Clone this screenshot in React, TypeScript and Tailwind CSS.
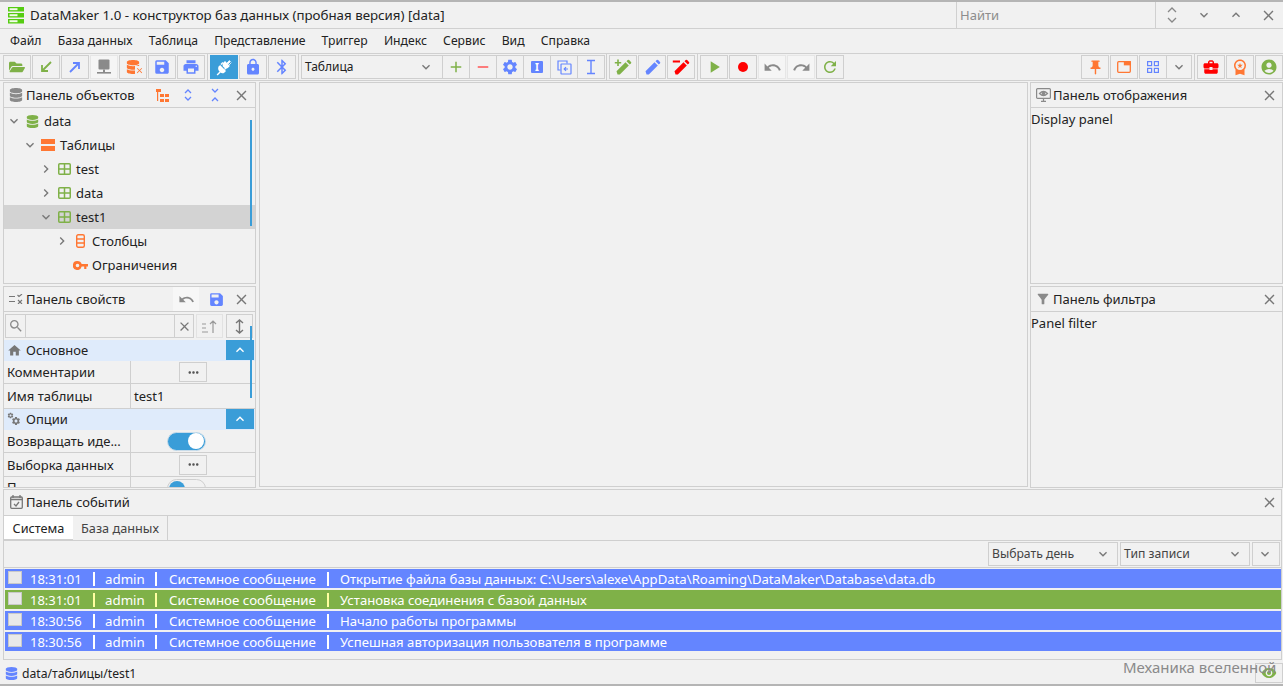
import React from "react";
import {
  MdUndo, MdRedo, MdRefresh, MdSave, MdPrint, MdLock, MdBluetooth, MdSettings, MdHome, MdSearch, MdClose,
  MdExpandMore, MdExpandLess, MdChevronRight, MdAdd, MdRemove, MdPlayArrow, MdPushPin, MdAccountCircle, MdFilterAlt, MdVisibility, MdMoreHoriz, MdBusinessCenter, MdWorkspacePremium,
} from "react-icons/md";
import { FaDatabase, FaFolderOpen } from "react-icons/fa";

const B = "#6485ff", G = "#7fb148", O = "#ff7733", R = "#ff0000", K = "#8a8a8a";

function Close() {
  return <MdClose size={17} color="#777" />;
}

function Tool({ w = "w-[28px]", on, light, children }: { w?: string; on?: boolean; light?: boolean; children: React.ReactNode }) {
  return (
    <div className={`${w} h-[24px] shrink-0 flex items-center justify-center border ${on ? "bg-[#3a9dd8] border-[#3a9dd8]" : light ? "border-[#e6e6e6] bg-[#f5f5f5]" : "border-[#cfcfcf]"}`}>
      {children}
    </div>
  );
}

function Sep() {
  return <div className="w-px h-[27px] bg-[#cfcfcf] mx-[1px] shrink-0" />;
}

function PanelHead({ icon, title, cls = "h-[24px] pr-[5px]", children }: { icon: React.ReactNode; title: string; cls?: string; children?: React.ReactNode }) {
  return (
    <div className={`${cls} shrink-0 flex items-center border-b border-[#cfcfcf] pl-[3px] box-content`}>
      <div className="w-[18px] flex justify-center shrink-0">{icon}</div>
      <span className="ml-[1px] flex-1 whitespace-nowrap">{title}</span>
      {children}
      <div className="ml-[8px]"><Close /></div>
    </div>
  );
}

function TreeRow({ pad, chev, icon, label, sel }: { pad: number; chev?: "down" | "right"; icon: React.ReactNode; label: string; sel?: boolean }) {
  return (
    <div className={`h-[24px] flex items-center ${sel ? "bg-[#d3d3d3]" : ""}`} style={{ paddingLeft: pad }}>
      <div className="w-[16px] flex justify-center shrink-0">
        {chev === "down" && <MdExpandMore size={16} color="#777" />}
        {chev === "right" && <MdChevronRight size={16} color="#777" />}
      </div>
      <div className="w-[16px] ml-[2px] flex justify-center shrink-0">{icon}</div>
      <span className="ml-[4px]">{label}</span>
    </div>
  );
}

function GridIcon() {
  return (
    <svg width="13" height="12" viewBox="0 0 13 12" fill="none" stroke={G} strokeWidth="1.5">
      <rect x="0.75" y="0.75" width="11.5" height="10.5" rx="1" />
      <path d="M0.75 6H12.25M6.5 0.75V11.25" />
    </svg>
  );
}

function Section({ icon, label }: { icon: React.ReactNode; label: string }) {
  return (
    <div className="h-[20px] flex items-center bg-[#dfebfb] border-b border-[#dfebfb] box-content">
      <div className="w-[16px] ml-[2px] flex justify-center shrink-0">{icon}</div>
      <span className="ml-[4px] flex-1">{label}</span>
      <div className="w-[28px] h-[20px] bg-[#3a9dd8] flex items-center justify-center mr-[1px]">
        <MdExpandLess size={16} color="#fff" />
      </div>
    </div>
  );
}

function PropRow({ label, h, children }: { label: string; h: string; children?: React.ReactNode }) {
  return (
    <div className={`${h} shrink-0 flex border-b border-[#cfcfcf]`}>
      <div className="w-[127px] pl-[3px] flex items-center border-r border-[#cfcfcf] whitespace-nowrap overflow-hidden">{label}</div>
      <div className="flex-1 flex items-center">{children}</div>
    </div>
  );
}

function Dots() {
  return (
    <div className="ml-[48px] w-[28px] h-[20px] border border-[#cfcfcf] flex items-center justify-center">
      <MdMoreHoriz size={15} color="#555" />
    </div>
  );
}

function Toggle({ off }: { off?: boolean }) {
  return (
    <div className={`ml-[36px] w-[39px] h-[19px] rounded-full border flex items-center ${off ? "bg-[#f1f1f1] border-[#cfcfcf] justify-start pl-[1px]" : "bg-[#3a9dd8] border-[#c8dcea] justify-end pr-[1px]"}`}>
      <div className={`w-[16px] h-[16px] rounded-full ${off ? "bg-[#3a9dd8]" : "bg-white"}`} />
    </div>
  );
}

function Bar({ color }: { color: string }) {
  return <span className="w-[2px] h-[14px] shrink-0" style={{ background: color }} />;
}

function LogRow({ color, time, text, bar }: { color: string; time: string; text: string; bar: string }) {
  return (
    <div className="h-[19px] flex items-center text-white whitespace-nowrap text-[13.3px]" style={{ background: color }}>
      <div className="w-[14px] h-[13px] ml-[3px] mr-[8px] bg-[#e9e9e9] border border-[#c9c9c9] shrink-0 self-start mt-[2px]" />
      <span className="w-[52px] mr-[11px] text-[13px]">{time}</span>
      <Bar color={bar} />
      <span className="w-[39px] ml-[10px] mr-[11px]">admin</span>
      <Bar color={bar} />
      <span className="w-[148px] ml-[12px] mr-[10px]">Системное сообщение</span>
      <Bar color={bar} />
      <span className="ml-[11px] text-[13.15px]">{text}</span>
    </div>
  );
}

function Combo({ w, label }: { w: string; label?: string }) {
  return (
    <div className={`${w} h-[24px] border border-[#cfcfcf] flex items-center pl-[3px] pr-[6px] text-[12.2px]`}>
      <span className="flex-1 text-[#444] whitespace-nowrap">{label}</span>
      <MdExpandMore size={16} color="#777" />
    </div>
  );
}

function PenIcon({ color, kind }: { color: string; kind?: "wand" | "dash" }) {
  return (
    <svg width="18" height="16" viewBox="0 0 18 16" fill={color}>
      <path d="M3.5 15.5L2.5 12.2 11.5 3.2 14.8 6.5 5.8 15.5z" />
      <path d="M12.5 2.2L13.7 1a1 1 0 0 1 1.4 0l1.9 1.9a1 1 0 0 1 0 1.4L15.8 5.5z" />
      {kind === "wand" && <path d="M3.2 0.5h1.6v2.4h2.4v1.6H4.8v2.4H3.2V4.5H0.8V2.9h2.4z" />}
      {kind === "dash" && <rect x="0.8" y="1.5" width="7.2" height="2" />}
    </svg>
  );
}

export default function App() {
  return (
    <div className="relative w-[1283px] h-[686px] overflow-hidden bg-[#f1f1f1] text-[13px] leading-[18px] text-[#222] font-['Noto_Sans',sans-serif] flex flex-col">
      <div className="h-[2px] bg-[#b5b5b5] shrink-0" />
      {/* title */}
      <div className="h-[27px] shrink-0 flex items-center border-b border-[#d0d0d0]">
        <svg className="ml-[8px]" width="17" height="17" viewBox="0 0 17 17">
          <rect y="0" width="16" height="4.5" fill="#55cc11" />
          <rect x="1.5" y="1.2" width="8" height="2" fill="#f2fbe8" />
          <rect y="6" width="16" height="4.5" fill="#55cc11" />
          <rect x="1.5" y="7.2" width="8" height="2" fill="#f2fbe8" />
          <rect y="12" width="16" height="4.5" fill="#55cc11" />
          <rect x="1.5" y="13.2" width="8" height="2" fill="#f2fbe8" />
        </svg>
        <span className="ml-[5px] flex-1 whitespace-nowrap text-[13.3px]">DataMaker 1.0 - конструктор баз данных (пробная версия) [data]</span>
        <div className="w-[200px] h-full border-l border-r border-[#d0d0d0] pl-[3px] flex items-center text-[#8d8d8d]">Найти</div>
        <div className="w-[127px] flex items-center justify-between pl-[8px] pr-[6px]">
          <svg width="16" height="20" viewBox="0 0 16 20" fill="none" stroke="#888" strokeWidth="1.3"><path d="M4 7l4-4 4 4M4 13l4 4 4-4" /></svg>
          <MdExpandMore size={16} color="#777" />
          <MdExpandLess size={16} color="#777" />
          <Close />
        </div>
      </div>
      {/* menu */}
      <div className="h-[25px] shrink-0 flex items-center gap-[16.2px] pl-[10px] border-b border-[#d0d0d0] text-[12.2px] whitespace-nowrap">
        {["Файл", "База данных", "Таблица", "Представление", "Триггер", "Индекс", "Сервис", "Вид", "Справка"].map((m) => (
          <span key={m}>{m}</span>
        ))}
      </div>
      {/* toolbar */}
      <div className="h-[27px] shrink-0 flex items-center pl-[3px] gap-px border-b border-[#d0d0d0]">
        <Tool><FaFolderOpen size={16} color={G} /></Tool>
        <Tool>
          <svg width="14" height="14" viewBox="0 0 14 14" fill="none" stroke={G} strokeWidth="1.8"><path d="M12 2L3 11M3 5v6h6" /></svg>
        </Tool>
        <Tool>
          <svg width="14" height="14" viewBox="0 0 14 14" fill="none" stroke={B} strokeWidth="1.8"><path d="M2 12L11 3M5 3h6v6" /></svg>
        </Tool>
        <Tool light>
          <svg width="16" height="16" viewBox="0 0 16 16" fill={K}><rect x="2.5" y="0.5" width="11" height="10" rx="1" /><rect x="7" y="10.5" width="2" height="2.5" /><rect x="1" y="13" width="14" height="1.6" /></svg>
        </Tool>
        <Tool>
          <span className="relative flex"><FaDatabase size={14} color={O} /><MdClose size={9} color={O} className="absolute -right-[4px] -bottom-[1px] bg-[#f1f1f1]" /></span>
        </Tool>
        <Tool><MdSave size={18} color={B} /></Tool>
        <Tool><MdPrint size={18} color={B} /></Tool>
        <Sep />
        <Tool on>
          <svg width="18" height="18" viewBox="0 0 18 18" fill="#fff">
            <path d="M8.5 4.6L10 3.1l4.9 4.9-1.5 1.5c-1 1-2.6 1.2-3.8.4L7.9 8.4C7.2 7.2 7.5 5.6 8.5 4.6z" />
            <path d="M12 5l2.4-2.4 1 1L13 6zM14 7l2.4-2.4" stroke="#fff" strokeWidth="0.8" />
            <path d="M3.6 8.5L5.1 7l5.9 5.9-1.5 1.5c-1 1-2.6 1.2-3.8.4L4 13.1c-1-1.2-1.1-3.4-.4-4.6z" />
            <path d="M4.6 13.4l-3 3 1 1 3-3z" />
            <path d="M5.5 6l2-2 .9.9-2 2zM9 11l2-2 .9.9-2 2z" />
          </svg>
        </Tool>
        <Tool><MdLock size={18} color={B} /></Tool>
        <Tool><MdBluetooth size={18} color={B} /></Tool>
        <Sep />
        <div className="w-[142px] h-[24px] border border-[#cfcfcf] flex items-center pl-[3px] pr-[8px] shrink-0 text-[12px]">
          <span className="flex-1">Таблица</span>
          <MdExpandMore size={16} color="#777" />
        </div>
        <div className="flex -ml-px -mr-px">
          {[
            <MdAdd key="a" size={18} color={G} />,
            <MdRemove key="b" size={18} color="#ff5555" />,
            <MdSettings key="c" size={18} color={B} />,
            <span key="d" className="w-[12px] h-[12px] rounded-[1px] flex items-center justify-center text-white text-[10px] font-bold bg-[#6485ff]">I</span>,
            <svg key="e" width="15" height="15" viewBox="0 0 15 15" fill="none" stroke={B} strokeWidth="1.2"><path d="M10 3.5V1H1v9h2.5" /><rect x="4" y="4" width="10" height="10" rx="0.5" /><path d="M11 9H7.5M9 7.2L7.2 9 9 10.8" /></svg>,
            <svg key="f" width="10" height="16" viewBox="0 0 10 16" fill="none" stroke={B} strokeWidth="1.4"><path d="M1 1.5h8M1 14.5h8M5 1.5v13" /></svg>,
          ].map((ic, i) => (
            <div key={i} className="-ml-px"><Tool w="w-[28px]">{ic}</Tool></div>
          ))}
        </div>
        <Sep />
        <Tool><PenIcon color={G} kind="wand" /></Tool>
        <Tool><PenIcon color={B} /></Tool>
        <Tool><PenIcon color={R} kind="dash" /></Tool>
        <Sep />
        <Tool><MdPlayArrow size={20} color={G} /></Tool>
        <Tool><span className="w-[10px] h-[10px] rounded-full bg-[#ff0000]" /></Tool>
        <Tool light><MdUndo size={19} color={K} /></Tool>
        <Tool light><MdRedo size={19} color={K} /></Tool>
        <Tool><MdRefresh size={18} color={G} /></Tool>
        <div className="flex-1" />
        <Tool><MdPushPin size={17} color={O} /></Tool>
        <Tool>
          <svg width="14" height="12" viewBox="0 0 14 12" fill="none" stroke={O} strokeWidth="1.3"><rect x="0.7" y="0.7" width="12.6" height="10.6" rx="1" /><rect x="7.5" y="0.7" width="5.8" height="3" fill={O} /></svg>
        </Tool>
        <div className="flex">
          <Tool>
            <svg width="12" height="12" viewBox="0 0 12 12" fill="none" stroke={B} strokeWidth="1.2"><rect x="0.6" y="0.6" width="4" height="4" /><rect x="7.4" y="0.6" width="4" height="4" /><rect x="0.6" y="7.4" width="4" height="4" /><rect x="7.4" y="7.4" width="4" height="4" /></svg>
          </Tool>
          <div className="-ml-px"><Tool w="w-[26px]"><MdExpandMore size={16} color="#777" /></Tool></div>
        </div>
        <Sep />
        <Tool><MdBusinessCenter size={18} color={R} /></Tool>
        <Tool><MdWorkspacePremium size={18} color={O} /></Tool>
        <Tool><MdAccountCircle size={18} color={G} /></Tool>
      </div>
      {/* main */}
      <div className="h-[407px] shrink-0 flex pt-[1px] pl-[3px] gap-[3px] overflow-hidden">
        <div className="w-[253px] shrink-0 flex flex-col gap-[2px]">
          <div className="relative h-[202px] shrink-0 border border-[#cfcfcf] overflow-hidden flex flex-col">
            <PanelHead icon={<FaDatabase size={14} color={K} />} title="Панель объектов">
              <div className="flex items-center gap-[11px] mr-[2px]">
                <svg width="13" height="13" viewBox="0 0 13 13" fill={O}><rect x="0" y="0" width="5" height="3" /><rect x="1" y="3" width="1.2" height="9" /><rect x="4" y="5" width="4" height="3" /><rect x="9" y="5" width="4" height="3" /><rect x="4" y="10" width="4" height="3" /><rect x="9" y="10" width="4" height="3" /></svg>
                <svg width="16" height="16" viewBox="0 0 16 16" fill="none" stroke={B} strokeWidth="1.3"><path d="M5 6l3-3 3 3M5 10l3 3 3-3" /></svg>
                <svg width="16" height="16" viewBox="0 0 16 16" fill="none" stroke={B} strokeWidth="1.3"><path d="M5 2l3 3 3-3M5 14l3-3 3 3" /></svg>
              </div>
            </PanelHead>
            <div className="flex-1 flex flex-col pt-[1px]">
              <TreeRow pad={2} chev="down" icon={<FaDatabase size={13} color={G} />} label="data" />
              <TreeRow pad={18} chev="down" icon={<svg width="14" height="12" viewBox="0 0 14 12" fill={O}><rect width="14" height="5" /><rect y="7" width="14" height="5" /></svg>} label="Таблицы" />
              <TreeRow pad={34} chev="right" icon={<GridIcon />} label="test" />
              <TreeRow pad={34} chev="right" icon={<GridIcon />} label="data" />
              <TreeRow pad={34} chev="down" icon={<GridIcon />} label="test1" sel />
              <TreeRow pad={50} chev="right" icon={<svg width="9" height="14" viewBox="0 0 9 14" fill="none" stroke={O} strokeWidth="1.4"><rect x="0.7" y="0.7" width="7.6" height="12.6" rx="1.5" /><path d="M0.7 5H8.3M0.7 9H8.3" /></svg>} label="Столбцы" />
              <TreeRow pad={50} icon={<svg width="15" height="9" viewBox="0 0 15 9" fill={O}><path fillRule="evenodd" d="M4.5 0a4.5 4.5 0 0 1 4.2 3H15v2.6h-1.6V8h-2.2V5.6H8.7A4.5 4.5 0 1 1 4.5 0zm0 2.7a1.8 1.8 0 1 0 0 3.6 1.8 1.8 0 0 0 0-3.6z" /></svg>} label="Ограничения" />
            </div>
            <div className="absolute left-[246px] top-[37px] w-[2px] h-[106px] bg-[#3a9dd8]" />
          </div>
          <div className="relative flex-1 border border-[#cfcfcf] overflow-hidden flex flex-col min-h-0">
            <PanelHead icon={
              <svg width="14" height="10" viewBox="0 0 14 10" fill="none" stroke="#777" strokeWidth="1.1"><path d="M0 2.5h6M0 7.5h6M8.5 1l1.5 1.5L13 0M9 6l4 4M13 6l-4 4" /></svg>
            } title="Панель свойств">
              <div className="flex items-center gap-[9px]">
                <div className="w-[26px] h-[24px] bg-[#f7f7f7] flex items-center justify-center"><MdUndo size={17} color={K} /></div>
                <MdSave size={17} color={B} />
              </div>
            </PanelHead>
            <div className="h-[26px] shrink-0 flex items-center px-[1px] gap-[2px] mt-[1px] mb-[1px]">
              <div className="flex h-[24px] border border-[#cfcfcf] w-[189px] shrink-0">
                <div className="w-[20px] flex items-center justify-center border-r border-[#cfcfcf]"><MdSearch size={16} color={K} /></div>
                <div className="flex-1 border-r border-[#cfcfcf]" />
                <div className="w-[18px] flex items-center justify-center"><MdClose size={15} color="#777" /></div>
              </div>
              <div className="w-[27px] h-[24px] border border-[#e2e2e2] flex items-center justify-center">
                <svg width="15" height="13" viewBox="0 0 15 13" fill="none" stroke="#999" strokeWidth="1.2"><path d="M0 4h4M0 8h4M0 12h6M11 13V1M8 4l3-3 3 3" /></svg>
              </div>
              <div className="w-[27px] h-[24px] border border-[#cfcfcf] flex items-center justify-center ml-[1px]">
                <svg width="9" height="15" viewBox="0 0 9 15" fill="none" stroke="#777" strokeWidth="1.4"><path d="M4.5 1v13M1 4l3.5-3L8 4M1 11l3.5 3L8 11" /></svg>
              </div>
            </div>
            <Section icon={<MdHome size={15} color="#777" />} label="Основное" />
            <PropRow label="Комментарии" h="h-[23px]"><Dots /></PropRow>
            <PropRow label="Имя таблицы" h="h-[25px]"><span className="pl-[3px]">test1</span></PropRow>
            <Section icon={
              <span className="relative flex w-[14px] h-[14px]">
                <MdSettings size={7} color="#777" className="absolute left-0 top-0" />
                <MdSettings size={10} color="#777" className="absolute right-0 bottom-0" />
              </span>
            } label="Опции" />
            <PropRow label="Возвращать иде..." h="h-[23px]"><Toggle /></PropRow>
            <PropRow label="Выборка данных" h="h-[24px]"><Dots /></PropRow>
            <div className="h-[23px] shrink-0 flex">
              <div className="w-[127px] pl-[3px] pt-[1px] border-r border-[#cfcfcf]">П</div>
              <div className="flex-1 pt-[2px]"><Toggle off /></div>
            </div>
            <div className="absolute left-[246px] top-[39px] w-[2px] h-[72px] bg-[#3a9dd8]" />
          </div>
        </div>
        <div className="w-[769px] shrink-0 border border-[#cfcfcf] h-[405px]" />
        <div className="w-[253px] -ml-[1px] shrink-0 flex flex-col gap-[2px]">
          <div className="h-[202px] shrink-0 border border-[#cfcfcf] flex flex-col">
            <PanelHead cls="h-[24px] pr-[4px]" icon={
              <svg width="15" height="14" viewBox="0 0 15 14" fill="none" stroke={K} strokeWidth="1.2"><rect x="0.6" y="0.6" width="13.8" height="9.8" rx="1" /><path d="M5 13.4h5M7.5 10.5v3" /><path d="M3.5 5.5Q7.5 1.5 11.5 5.5 7.5 9.5 3.5 5.5z" /><circle cx="7.5" cy="5.5" r="1.2" fill={K} /></svg>
            } title="Панель отображения" />
            <div className="pt-[2px]">Display panel</div>
          </div>
          <div className="flex-1 border border-[#cfcfcf] flex flex-col">
            <PanelHead cls="h-[24px] pr-[4px]" icon={<MdFilterAlt size={16} color={K} />} title="Панель фильтра" />
            <div className="pt-[2px]">Panel filter</div>
          </div>
        </div>
      </div>
      {/* events */}
      <div className="h-[171px] shrink-0 ml-[3px] mr-[1px] mt-[1px] border border-[#cfcfcf] flex flex-col">
        <PanelHead cls="h-[24px] pb-[1px] pr-[3px]" icon={<svg width="13" height="14" viewBox="0 0 13 14" fill="none" stroke="#777" strokeWidth="1.3"><rect x="0.7" y="2" width="11.6" height="11.3" rx="1" /><path d="M0.7 4.5h11.6M3 0v3M10 0v3M4 9l2 2 3-4" /></svg>} title="Панель событий" />
        <div className="h-[25px] shrink-0 flex border-b border-[#cfcfcf] text-[12.7px]">
          <div className="w-[69px] bg-white border-b-[2px] border-[#cfcfcf] flex items-center justify-center -mb-px">Система</div>
          <div className="w-[95px] border-r border-[#cfcfcf] flex items-center justify-center text-[#444]">База данных</div>
        </div>
        <div className="h-[27px] shrink-0 flex items-center justify-end gap-[2px] pr-[1px] border-b border-[#cfcfcf]">
          <Combo w="w-[130px]" label="Выбрать день" />
          <Combo w="w-[130px]" label="Тип записи" />
          <Combo w="w-[28px]" />
        </div>
        <div className="flex flex-col gap-[2px] pl-[1px] pt-[1px]">
          <LogRow color="#6485ff" bar="#fff" time="18:31:01" text="Открытие файла базы данных: C:\Users\alexe\AppData\Roaming\DataMaker\Database\data.db" />
          <LogRow color="#7fb148" bar="#ffffa0" time="18:31:01" text="Установка соединения с базой данных" />
          <LogRow color="#6485ff" bar="#fff" time="18:30:56" text="Начало работы программы" />
          <LogRow color="#6485ff" bar="#fff" time="18:30:56" text="Успешная авторизация пользователя в программе" />
        </div>
      </div>
      {/* status */}
      <div className="flex-1 flex items-center pl-[5px] pt-[2px] border-b-[2px] border-[#b5b5b5] mt-[1px]">
        <FaDatabase size={13} color={B} />
        <span className="ml-[4px] text-[12.2px]">data/таблицы/test1</span>
      </div>
      <div className="absolute left-[1255px] top-[663px] w-[28px] h-[20px] border border-[#cfcfcf] flex items-center justify-center">
        <MdVisibility size={16} color={G} />
      </div>
      <div className="absolute left-[1123px] top-[658px] text-[15px] text-[#8a8a8a] whitespace-nowrap">Механика вселенной</div>
    </div>
  );
}
